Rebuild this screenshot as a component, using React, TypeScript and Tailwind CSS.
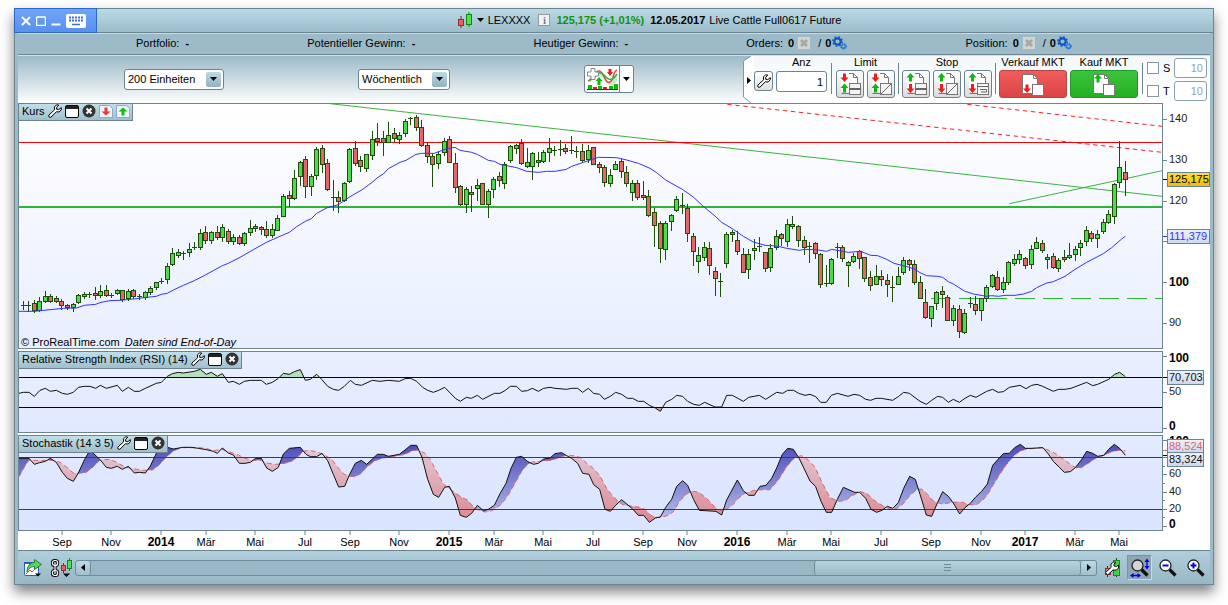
import { ReactNode } from "react";

type Candle = [number, number, number, number, string];

// high, body top, body bottom, low, kind (g = up, r = down, d = doji)
const candles: Candle[] = [
  [604, 616, 616, 629, "d"], [604, 616, 616, 633, "d"], [601, 610, 631, 637, "r"], [592, 604, 631, 634, "g"],
  [574, 589, 603, 607, "g"], [583, 589, 604, 606, "r"], [589, 595, 603, 607, "r"], [598, 604, 615, 627, "r"],
  [614, 616, 622, 629, "r"], [610, 613, 622, 634, "g"], [583, 586, 607, 609, "g"], [578, 583, 588, 594, "g"],
  [576, 583, 583, 592, "d"], [562, 580, 586, 597, "r"], [556, 574, 586, 591, "g"], [556, 571, 586, 590, "r"],
  [580, 585, 585, 592, "d"], [567, 571, 580, 584, "g"], [570, 571, 597, 604, "r"], [567, 573, 594, 600, "g"],
  [567, 571, 589, 594, "r"], [583, 590, 590, 598, "d"], [573, 577, 592, 598, "g"], [559, 565, 577, 583, "g"],
  [546, 547, 562, 568, "g"], [534, 545, 545, 551, "d"], [489, 499, 538, 551, "g"], [445, 460, 493, 496, "g"],
  [447, 457, 466, 472, "g"], [455, 459, 459, 479, "d"], [430, 448, 457, 470, "g"], [427, 443, 443, 448, "d"],
  [388, 400, 442, 449, "g"], [378, 397, 421, 431, "r"], [394, 397, 421, 431, "g"], [378, 397, 412, 418, "r"],
  [373, 382, 412, 425, "g"], [387, 394, 424, 431, "r"], [403, 412, 424, 433, "g"], [406, 412, 430, 434, "r"],
  [397, 400, 430, 437, "g"], [360, 385, 397, 407, "g"], [373, 380, 384, 395, "r"], [378, 382, 388, 404, "r"],
  [364, 388, 407, 412, "r"], [372, 388, 407, 413, "g"], [345, 355, 391, 392, "g"], [282, 290, 349, 350, "g"],
  [273, 286, 295, 319, "r"], [210, 235, 295, 298, "g"], [183, 187, 229, 255, "g"], [168, 178, 259, 293, "r"],
  [222, 229, 259, 285, "g"], [141, 148, 227, 237, "g"], [135, 145, 193, 216, "r"], [178, 190, 268, 270, "r"],
  [240, 293, 293, 332, "d"], [274, 292, 304, 338, "r"], [246, 250, 301, 303, "g"], [145, 148, 244, 248, "g"],
  [123, 145, 190, 195, "r"], [168, 181, 199, 213, "r"], [162, 163, 205, 213, "g"], [93, 118, 166, 177, "g"],
  [69, 115, 123, 137, "r"], [94, 115, 127, 167, "r"], [66, 106, 127, 128, "g"], [85, 100, 115, 123, "r"],
  [97, 106, 118, 131, "g"], [57, 64, 100, 110, "g"], [51, 56, 56, 72, "d"], [45, 52, 82, 90, "r"],
  [60, 82, 136, 140, "r"], [130, 136, 169, 188, "r"], [163, 169, 193, 258, "r"], [154, 163, 190, 206, "g"],
  [114, 124, 157, 165, "g"], [108, 118, 187, 188, "r"], [159, 190, 262, 278, "r"], [256, 259, 313, 315, "r"],
  [262, 268, 313, 338, "g"], [259, 277, 283, 335, "r"], [237, 256, 265, 300, "g"], [250, 250, 313, 314, "r"],
  [268, 274, 313, 353, "g"], [231, 238, 268, 293, "g"], [216, 229, 241, 258, "r"], [188, 193, 250, 264, "g"],
  [136, 139, 181, 186, "g"], [132, 136, 145, 161, "g"], [117, 130, 190, 194, "r"], [144, 187, 199, 203, "g"],
  [157, 160, 199, 237, "g"], [156, 181, 187, 200, "r"], [150, 157, 184, 188, "g"], [114, 145, 157, 183, "g"],
  [138, 151, 151, 165, "d"], [120, 147, 147, 165, "d"], [132, 145, 154, 161, "r"], [108, 152, 152, 161, "d"],
  [138, 154, 154, 173, "d"], [132, 154, 181, 188, "r"], [136, 150, 178, 186, "g"], [142, 142, 193, 194, "r"],
  [186, 193, 202, 218, "r"], [196, 202, 247, 258, "r"], [207, 226, 250, 258, "g"], [184, 193, 208, 209, "g"],
  [177, 184, 214, 231, "r"], [198, 217, 250, 258, "r"], [240, 250, 277, 302, "g"], [240, 250, 292, 299, "r"],
  [243, 286, 292, 299, "r"], [270, 290, 346, 350, "r"], [324, 337, 376, 438, "r"], [363, 370, 445, 486, "r"],
  [363, 370, 448, 479, "g"], [342, 346, 364, 390, "g"], [288, 298, 331, 335, "g"], [279, 316, 316, 339, "d"],
  [312, 325, 400, 423, "r"], [400, 409, 454, 495, "r"], [441, 466, 485, 518, "g"], [426, 442, 472, 480, "g"],
  [426, 445, 496, 522, "r"], [501, 514, 535, 585, "r"], [519, 543, 543, 588, "d"], [396, 403, 490, 503, "g"],
  [390, 397, 403, 425, "r"], [393, 421, 454, 462, "r"], [444, 463, 517, 518, "r"], [447, 463, 508, 534, "g"],
  [417, 445, 451, 477, "g"], [411, 439, 439, 455, "d"], [457, 457, 505, 513, "r"], [433, 445, 502, 513, "g"],
  [390, 409, 442, 447, "g"], [399, 403, 415, 435, "r"], [357, 373, 424, 438, "g"], [348, 374, 380, 384, "g"],
  [375, 379, 421, 438, "r"], [408, 421, 442, 462, "r"], [426, 439, 439, 486, "d"], [426, 430, 460, 476, "r"],
  [459, 463, 553, 563, "r"], [495, 551, 551, 560, "d"], [475, 478, 550, 552, "g"], [429, 443, 443, 473, "d"],
  [436, 442, 475, 483, "r"], [483, 487, 496, 560, "g"], [460, 469, 485, 486, "g"], [450, 455, 475, 504, "r"],
  [472, 472, 535, 545, "r"], [513, 532, 556, 572, "r"], [495, 529, 553, 554, "g"], [510, 530, 538, 555, "r"],
  [522, 541, 553, 590, "r"], [529, 563, 563, 603, "d"], [501, 529, 553, 554, "g"], [471, 481, 517, 522, "g"],
  [477, 482, 493, 512, "r"], [481, 493, 547, 554, "r"], [528, 547, 595, 596, "r"], [567, 607, 653, 656, "r"],
  [618, 619, 655, 680, "g"], [573, 577, 610, 628, "g"], [558, 574, 583, 621, "r"], [586, 592, 661, 662, "r"],
  [616, 625, 661, 677, "g"], [616, 628, 695, 713, "r"], [628, 640, 697, 700, "g"], [591, 611, 611, 623, "d"],
  [588, 613, 631, 644, "r"], [595, 595, 631, 662, "g"], [556, 562, 595, 605, "g"], [523, 526, 559, 562, "g"],
  [513, 532, 569, 572, "r"], [532, 547, 569, 578, "g"], [483, 487, 548, 554, "g"], [462, 478, 490, 497, "g"],
  [450, 463, 478, 489, "g"], [472, 475, 496, 506, "r"], [435, 448, 493, 506, "g"], [411, 427, 445, 446, "g"],
  [421, 430, 451, 457, "r"], [462, 472, 478, 506, "g"], [459, 469, 502, 504, "r"], [475, 481, 505, 515, "g"],
  [450, 472, 478, 485, "r"], [429, 466, 472, 475, "g"], [438, 448, 463, 482, "g"], [421, 430, 442, 467, "g"],
  [378, 391, 424, 437, "g"], [394, 400, 415, 425, "r"], [390, 403, 415, 443, "g"], [357, 367, 395, 401, "g"],
  [331, 343, 367, 369, "g"], [249, 253, 349, 371, "g"], [123, 202, 247, 261, "g"], [183, 217, 238, 287, "r"],
];

const average =
  "57,634 103,634 150,629 190,625 230,624 253,616 287,613 303,607 330,602 360,601 400,597 440,592 469,589 484,583 502,580 520,570 550,556 583,542 610,528 640,512 667,497 685,490 720,472 760,449 799,427 835,411 868,397 890,380 916,364 934,356 950,340 982,323 1015,314 1033,302 1050,290 1085,270 1115,248 1135,231 1150,222 1165,206 1200,187 1218,181 1248,163 1265,160 1303,160 1340,146 1365,142 1380,151 1415,157 1432,163 1465,181 1483,184 1500,193 1550,203 1580,214 1615,217 1640,214 1665,214 1699,208 1715,199 1750,187 1795,172 1850,173 1880,180 1915,190 1950,205 1970,218 1997,240 2047,268 2080,291 2112,321 2145,348 2165,367 2200,388 2230,409 2260,426 2295,436 2330,438 2360,445 2398,451 2415,448 2447,449 2480,454 2495,448 2545,457 2582,454 2612,466 2633,467 2660,478 2682,490 2725,501 2745,508 2760,518 2780,527 2812,529 2828,532 2845,545 2860,552 2893,573 2920,582 2960,589 2975,587 2995,589 3015,586 3045,586 3070,582 3095,574 3110,563 3140,549 3160,545 3195,529 3225,508 3260,487 3310,461 3335,443 3365,417 3376,409";

const rsi =
  "57,160 70,157 87,157 103,169 120,151 136,145 151,154 169,151 187,160 202,163 220,157 235,142 253,139 270,139 287,145 301,136 319,145 352,136 367,154 385,142 403,154 418,154 436,145 469,130 484,127 502,109 517,101 535,97 550,99 583,94 601,88 619,103 634,97 652,109 667,101 685,127 700,124 718,133 733,124 751,121 784,121 799,133 817,127 835,115 850,100 868,103 883,95 901,89 916,121 931,118 950,103 965,118 983,139 1000,148 1016,151 1033,139 1051,121 1066,133 1084,136 1117,121 1140,124 1165,121 1198,124 1215,116 1232,115 1250,124 1268,142 1283,151 1300,157 1316,151 1334,142 1366,175 1381,184 1399,172 1414,175 1432,166 1448,178 1483,160 1500,160 1516,151 1531,139 1549,139 1565,154 1582,152 1597,145 1615,154 1631,145 1650,142 1665,145 1700,148 1715,145 1733,145 1748,157 1765,145 1781,160 1799,163 1813,178 1831,169 1847,157 1865,163 1882,175 1898,175 1915,184 1931,184 1948,196 1966,204 1981,214 1997,187 2015,178 2030,166 2048,169 2063,184 2081,193 2098,196 2114,187 2145,201 2165,201 2180,166 2197,166 2230,184 2246,172 2278,166 2297,178 2330,157 2348,160 2363,151 2381,151 2396,160 2415,166 2430,163 2447,170 2462,187 2479,187 2494,166 2512,160 2544,169 2562,163 2579,166 2597,178 2612,181 2628,175 2644,175 2678,181 2695,170 2711,157 2728,160 2760,184 2779,193 2795,181 2813,169 2828,172 2845,187 2860,178 2878,187 2895,175 2911,166 2928,172 2960,154 2978,148 2994,157 3010,155 3028,142 3060,136 3078,146 3095,136 3111,133 3128,139 3160,154 3176,148 3195,148 3213,145 3260,127 3278,137 3293,133 3326,118 3344,103 3359,97 3376,110";

const stochK =
  "57,355 87,355 103,373 119,368 136,364 151,355 169,367 187,397 202,415 220,424 235,399 253,360 270,330 301,360 319,382 334,385 352,379 367,388 385,379 403,399 418,397 436,399 451,378 469,340 484,325 502,322 520,327 548,322 575,322 595,325 619,329 640,334 652,340 667,324 685,339 700,345 718,370 735,370 751,367 767,355 784,355 800,384 817,394 835,382 850,342 868,325 901,322 918,343 931,350 950,350 966,340 983,362 1000,403 1016,441 1034,439 1048,405 1066,370 1084,361 1100,373 1117,357 1132,343 1150,343 1165,349 1198,343 1215,330 1232,316 1250,316 1266,352 1283,418 1300,463 1316,472 1334,442 1348,439 1366,474 1381,526 1399,532 1415,520 1432,496 1450,512 1465,508 1483,496 1500,461 1518,430 1533,385 1549,352 1565,349 1582,364 1600,373 1615,370 1631,357 1650,354 1665,341 1685,338 1700,347 1715,355 1733,370 1748,400 1767,403 1781,434 1799,448 1815,508 1831,514 1847,496 1865,479 1898,507 1915,526 1931,526 1948,547 1966,534 1981,531 1997,502 2015,478 2030,439 2048,422 2063,436 2081,479 2098,511 2148,514 2165,525 2180,480 2212,420 2230,452 2246,466 2263,466 2280,439 2298,436 2315,415 2330,384 2347,343 2363,325 2380,328 2398,356 2430,423 2447,440 2463,484 2479,517 2495,517 2512,478 2530,442 2564,457 2579,457 2597,475 2613,508 2630,517 2646,511 2662,499 2678,505 2695,488 2711,445 2729,409 2746,418 2760,463 2779,525 2795,529 2813,487 2828,455 2845,469 2860,489 2879,522 2895,503 2911,490 2928,470 2945,454 2962,432 2978,376 2994,358 3010,341 3028,340 3044,323 3061,313 3076,325 3093,325 3129,323 3145,342 3160,364 3178,382 3193,397 3211,395 3226,383 3244,360 3260,334 3278,340 3293,349 3311,346 3326,328 3343,313 3359,325 3376,346";

const stochD =
  "57,410 75,378 87,360 110,361 136,361 160,361 180,367 205,385 220,399 235,400 257,398 275,385 300,360 330,358 350,367 375,381 400,386 430,391 457,390 475,377 500,350 520,333 545,323 600,323 625,327 640,332 665,328 690,336 715,345 735,355 755,361 785,361 800,369 825,373 845,372 870,366 890,354 910,334 925,331 950,335 975,346 995,358 1010,378 1033,403 1048,409 1065,410 1084,400 1100,382 1125,362 1150,354 1175,350 1200,346 1215,343 1235,333 1255,330 1275,340 1290,358 1305,385 1330,432 1350,448 1365,458 1385,472 1402,480 1420,500 1435,510 1455,516 1470,514 1483,508 1505,492 1525,465 1545,430 1565,394 1582,374 1597,366 1620,364 1655,361 1680,352 1695,347 1722,347 1740,352 1765,374 1780,385 1800,408 1820,445 1840,470 1858,487 1870,495 1915,501 1935,508 1952,526 1970,532 1985,532 2005,526 2020,515 2040,482 2060,462 2075,454 2095,456 2120,475 2145,502 2158,512 2180,508 2197,496 2215,475 2235,460 2265,450 2310,449 2335,420 2360,380 2385,352 2405,347 2425,360 2445,382 2470,435 2490,473 2515,484 2535,482 2555,468 2580,455 2600,460 2625,483 2650,498 2665,505 2690,506 2710,491 2730,466 2750,449 2765,447 2780,460 2800,483 2825,492 2860,487 2885,486 2905,493 2925,496 2945,484 2962,465 2980,434 3000,402 3020,373 3044,345 3062,333 3080,327 3125,323 3145,330 3170,343 3195,361 3215,376 3230,384 3244,383 3265,370 3293,351 3310,347 3335,335 3359,331 3376,332";

const months: [number, string][] = [
  [44, "Sep"], [93, "Nov"], [143, "2014"], [188, "Mär"], [237, "Mai"], [287, "Jul"],
  [332, "Sep"], [381, "Nov"], [431, "2015"], [476, "Mär"], [525, "Mai"], [575, "Jul"],
  [625, "Sep"], [669, "Nov"], [719, "2016"], [769, "Mär"], [813, "Mai"], [863, "Jul"],
  [913, "Sep"], [963, "Nov"], [1007, "2017"], [1057, "Mär"], [1101, "Mai"],
];

// snap to whole pixels, three drawing units each
const snap = (v: number) => Math.floor(v / 3) * 3;

const PriceChart = () => (
  <svg viewBox="57 12 3429 732" preserveAspectRatio="none" className="block h-[244px] w-full">
    <path d="M990 11L3487 289M3028 311L3487 212" stroke="#3cb43c" strokeWidth="3" />
    <path d="M2182 13L3487 157M2902 13L3487 79" stroke="#ff2020" strokeWidth="3" strokeDasharray="13 11" />
    <path d="M57 127.500H3487" stroke="#ff0000" strokeWidth="3" />
    <path d="M57 321H3487" stroke="#2fb52f" strokeWidth="6" />
    <path d="M2793 595.500H3487" stroke="#2fb52f" strokeWidth="3" strokeDasharray="60 24" />
    <g shapeRendering="crispEdges">
      {candles.map(([high, top, bottom, low, kind], i) => {
        const x = Math.floor(23.2 + 5.5377 * i) * 3;
        return (
          <g key={i}>
            <rect x={x} y={snap(high)} width="3" height={snap(low) - snap(high) + 3} fill="#1f4d0a" />
            {kind === "d" ? (
              <rect x={x - 6} y={snap(top)} width="15" height="3" fill="#1f4d0a" />
            ) : (
              <>
                <rect x={x - 6} y={snap(top)} width="15" height={snap(bottom) - snap(top) + 3} fill="#1f4d0a" />
                <rect
                  x={x - 3}
                  y={snap(top) + 3}
                  width="9"
                  height={Math.max(snap(bottom) - snap(top) - 3, 0)}
                  fill={kind === "g" ? "#50d850" : "#e06868"}
                />
              </>
            )}
          </g>
        );
      })}
    </g>
    <polyline points={average} fill="none" stroke="#3333ff" strokeWidth="3" />
  </svg>
);

const RsiChart = () => (
  <svg viewBox="57 36 3429 240" preserveAspectRatio="none" className="block h-20 w-full">
    <clipPath id="overbought">
      <rect x="57" y="36" width="3429" height="76" />
    </clipPath>
    <clipPath id="oversold">
      <rect x="57" y="203" width="3429" height="73" />
    </clipPath>
    <polygon points={`57,276 ${rsi} 3376,276`} fill="#b2e2bc" clipPath="url(#overbought)" />
    <polygon points={`57,36 ${rsi} 3376,36`} fill="#e09aa4" clipPath="url(#oversold)" />
    <path d="M57 112.500H3487M57 202.500H3487" stroke="#000" strokeWidth="3" />
    <polyline points={rsi} fill="none" stroke="#111" strokeWidth="3" />
  </svg>
);

const StochasticChart = () => (
  <svg viewBox="57 288 3429 282" preserveAspectRatio="none" className="block h-[94px] w-full">
    <defs>
      <linearGradient id="rise" gradientUnits="userSpaceOnUse" x1="0" y1="310" x2="0" y2="540">
        <stop offset="0" stopColor="#4c4cb8" />
        <stop offset="1" stopColor="#b4bcec" />
      </linearGradient>
      <linearGradient id="drop" gradientUnits="userSpaceOnUse" x1="0" y1="310" x2="0" y2="540">
        <stop offset="0" stopColor="#e2ccdc" />
        <stop offset="1" stopColor="#dc8a94" />
      </linearGradient>
      <clipPath id="aboveD">
        <polygon points={`57,288 ${stochD} 3376,288`} />
      </clipPath>
      <clipPath id="belowD">
        <polygon points={`57,570 ${stochD} 3376,570`} />
      </clipPath>
    </defs>
    <polygon points={`57,570 ${stochK} 3376,570`} fill="url(#rise)" clipPath="url(#aboveD)" />
    <polygon points={`57,288 ${stochK} 3376,288`} fill="url(#drop)" clipPath="url(#belowD)" />
    <polyline points={stochD} fill="none" stroke="#e06464" strokeWidth="3" strokeDasharray="14 10" />
    <path d="M57 352.500H3487M57 508.500H3487" stroke="#2c2ccc" strokeWidth="3" />
    <polyline points={stochK} fill="none" stroke="#111" strokeWidth="3" />
  </svg>
);

const Tag = ({ y, w, fill, color, label }: { y: number; w: number; fill: string; color: string; label: string }) => (
  <>
    <rect x="4.500" y={y + 0.5} width={w} height="14" fill={fill} stroke="#6c8490" />
    <text x="6" y={y + 11} fill={color}>{label}</text>
  </>
);

const Axis = ({ className, ticks, children }: { className: string; ticks: string; children: ReactNode }) => (
  <svg className={`block w-[47px] shrink-0 text-[11px] ${className}`} fill="#222">
    <defs>
      <linearGradient id="gold" x2="0" y2="1">
        <stop stopColor="#ffe030" />
        <stop offset="1" stopColor="#f0b810" />
      </linearGradient>
      <linearGradient id="pale" x2="0" y2="1">
        <stop stopColor="#eef3fc" />
        <stop offset="1" stopColor="#ccd8ee" />
      </linearGradient>
    </defs>
    <path d={ticks} stroke="#6c8490" />
    {children}
  </svg>
);

const Wrench = ({ size = 14 }: { size?: number }) => (
  <svg width={size} height={size} viewBox="0 0 14 14" className="shrink-0">
    <path
      d="M8.800.8L6.400 2.800 6.600 5.800.8 11.200 1 13 2.800 13.300 8.400 7.800 11.200 8 13.300 5.800V3.600L10.800 5.700 8.600 5.200 8.700 3.200 10.800 1.200Z"
      fill="#fff"
      stroke="#000"
      strokeLinejoin="round"
    />
  </svg>
);

const WindowIcon = () => (
  <svg width="14" height="13" viewBox="0 0 14 13" className="shrink-0">
    <rect x=".5" y=".5" width="13" height="12" rx="1.500" fill="#fff" stroke="#000" />
    <path d="M1 1H13V4H1Z" fill="#222" />
  </svg>
);

const CloseIcon = () => (
  <svg width="14" height="14" viewBox="0 0 14 14" className="shrink-0">
    <circle cx="7" cy="7" r="6.500" fill="#333" />
    <path d="M4.500 4.500L9.500 9.500M9.500 4.500L4.500 9.500" stroke="#fff" strokeWidth="2" />
  </svg>
);

const ArrowNote = ({ up }: { up?: boolean }) => (
  <svg width="14" height="13" viewBox="0 0 14 13" className="shrink-0">
    <path d="M.5.500H10.500L13.500 3.500V12.500H.5Z" fill="#eef4fc" stroke="#8fa9c8" />
    <path
      d={up ? "M7 2.500L11.500 6.500H8.500V10.500H5.500V6.500H2.500Z" : "M7 10.500L11.500 6.500H8.500V2.500H5.500V6.500H2.500Z"}
      fill={up ? "#10c010" : "#f03838"}
    />
  </svg>
);

const PanelTitle = ({ title, notes }: { title: string; notes?: boolean }) => (
  <div className="absolute -left-px -top-px flex h-[18px] items-center gap-[3px] border border-[#6c8490] bg-linear-to-b from-[#c0dfea] to-[#a0bfcc] pb-0.5 pl-[3px] pr-0.5">
    <h2>{title}</h2>
    <button aria-label="Einstellungen"><Wrench /></button>
    <button aria-label="Fenster"><WindowIcon /></button>
    <button aria-label="Entfernen"><CloseIcon /></button>
    {notes && (
      <>
        <button aria-label="Verkaufen"><ArrowNote /></button>
        <button aria-label="Kaufen"><ArrowNote up /></button>
      </>
    )}
  </div>
);

const Gears = () => (
  <svg width="15" height="14" viewBox="0 0 15 14" fill="none">
    <circle cx="5.500" cy="5.500" r="3.200" stroke="#0d56c4" strokeWidth="2.200" />
    <circle cx="5.500" cy="5.500" r="4.700" stroke="#0d56c4" strokeWidth="1.400" strokeDasharray="1.850 1.850" />
    <circle cx="11.500" cy="10.300" r="1.900" stroke="#2a74dc" strokeWidth="1.400" />
    <circle cx="11.500" cy="10.300" r="3" stroke="#2a74dc" strokeWidth="1" strokeDasharray="1.200 1.200" />
  </svg>
);

const Counter = ({ label }: { label: string }) => (
  <div className="flex items-center">
    <span className="mr-[5px]">{label}</span>
    <b>0</b>
    <svg width="12" height="12" viewBox="0 0 12 12" className="ml-1 mr-2">
      <rect width="12" height="12" fill="#d4d4cf" />
      <path d="M3 3L9 9M9 3L3 9" stroke="#a8a8a4" strokeWidth="3" />
    </svg>
    <span className="mr-1">/</span>
    <b className="mr-px">0</b>
    <Gears />
  </div>
);

const Caret = () => (
  <svg width="7" height="4" viewBox="0 0 7 4">
    <path d="M0 0H7L3.500 4Z" />
  </svg>
);

const Picker = ({ label, value, className }: { label: string; value: string; className: string }) => (
  <div className={`relative h-[21px] ${className}`}>
    <select
      aria-label={label}
      className="h-full w-full appearance-none rounded-[3px] border border-[#6c8490] bg-white pl-[3px] outline-none"
    >
      <option>{value}</option>
    </select>
    <span className="pointer-events-none absolute right-[3px] top-[3px] flex h-[15px] w-[15px] items-center justify-center rounded-[2px] bg-linear-to-b from-[#bcdae6] to-[#92b2c0]">
      <Caret />
    </span>
  </div>
);

const Arrows = ({ upFirst }: { upFirst?: boolean }) => (
  <>
    <path
      d={upFirst ? "M8.500 3L12.500 7.500H10V11.500H7V7.500H4.500Z" : "M8.500 12L12.500 7.500H10V3.500H7V7.500H4.500Z"}
      fill={upFirst ? "#0fb80f" : "#ee1c1c"}
    />
    <path
      d={upFirst ? "M8.500 23L12.500 18.500H10V14H7V18.500H4.500Z" : "M8.500 13.500L12.500 18H10V22.500H7V18H4.500Z"}
      fill={upFirst ? "#ee1c1c" : "#0fb80f"}
    />
  </>
);

const OrderButton = ({ name, upFirst, mark }: { name: string; upFirst?: boolean; mark: string }) => (
  <button
    aria-label={name}
    className="h-7 w-7 rounded-[3px] border border-[#6c8490] bg-linear-to-b from-white to-[#dcdcdc]"
  >
    <svg width="26" height="26" viewBox="1 1 26 26" fill="none" stroke="#777">
      <path d="M5.500 3.500H17.500L21.500 7.500V21.500H5.500Z" fill="#fff" stroke="none" />
      <path d="M13 3.500H17.500L21.500 7.500V13M17.500 3.500V7.500H21.500M5.500 23.500H13" />
      <rect x="13.500" y="13.500" width="11" height="11" fill="#f4f4f4" />
      <path d={mark} stroke="#666" />
      <g stroke="none"><Arrows upFirst={upFirst} /></g>
    </svg>
  </button>
);

const BARS = "M13 18.500H25M13 19.500H25";
const SLASH = "M14 24L24 14";
const STEP = "M13 16.500H25M16 19.500H22.500V22H17";

const Separator = ({ wide }: { wide?: boolean }) => (
  <span className={`mt-[7px] h-[31px] w-px bg-[#6c8490] ${wide ? "mx-px" : ""}`} />
);

const Group = ({ label, children }: { label: string; children: ReactNode }) => (
  <div className="flex flex-col items-center">
    <span className="h-3.5 leading-[13px]">{label}</span>
    <div className="flex gap-[3px]">{children}</div>
  </div>
);

const MarketButton = ({ label, buy }: { label: string; buy?: boolean }) => (
  <Group label={label}>
    <button
      aria-label={label}
      className={`flex h-7 w-[68px] justify-center rounded-[3px] border ${
        buy
          ? "border-[#1f9a2a] bg-linear-to-b from-[#3cc43c] to-[#22b022]"
          : "border-[#b84848] bg-linear-to-b from-[#f05c5c] to-[#dc4444]"
      }`}
    >
      <svg width="26" height="26" viewBox="0 0 26 26" fill="#fff" stroke="#777">
        <path d="M2.500 3.500H13.500L17.500 7.500V22.500H2.500Z" />
        <path d="M13.500 3.500V7.500H17.500" fill="none" />
        <rect x="12.500" y="13.500" width="11" height="11" />
        <path
          d={buy ? "M7 3L11 7.500H8.500V11.500H5.500V7.500H3Z" : "M7 22L11 17.500H8.500V13.500H5.500V17.500H3Z"}
          fill={buy ? "#0fb80f" : "#ee1c1c"}
          stroke="none"
        />
      </svg>
    </button>
  </Group>
);

const Protection = ({ label }: { label: string }) => (
  <div className="flex items-center">
    <label className="flex w-[27px] items-center gap-1">
      <input type="checkbox" className="h-3 w-3 shrink-0 appearance-none border border-[#8398a4] bg-white" />
      {label}
    </label>
    <input
      aria-label={`${label} Punkte`}
      defaultValue="10"
      className="h-5 w-[33px] rounded-[3px] border border-[#8aa0ac] bg-white pr-[3px] text-right text-[#94a4ae] outline-none"
    />
  </div>
);

const Toolbar = () => (
  <div className="flex h-12 border-t border-[#cfe3ec] bg-linear-to-b from-[#9cbac8] to-[#fdfefe]">
    <div className="flex flex-1 items-center justify-between pb-px pl-[106px] pr-[109px]">
      <Picker label="Einheiten" value="200 Einheiten" className="w-[100px]" />
      <Picker label="Zeitrahmen" value="Wöchentlich" className="w-[92px]" />
      <div className="flex h-7 w-[50px] rounded-[3px] border border-[#6c8490] bg-white">
        <button aria-label="Indikator hinzufügen" className="flex flex-1 items-center justify-center border-r border-[#6c8490]">
          <svg width="33" height="24" viewBox="0 0 33 24" fill="none">
            <path d="M3 14C6 8 8 4 12 4C18 4 19 16 24 15C27 14 29 8 31 6V14C28 20 21 20 17 12C13 5 8 12 4 15Z" fill="#c4ecca" />
            <path d="M2 14C6 13 8 4 13 4C18 4 19 18 24 15C28 13 27 4 31 3" stroke="#e04848" strokeWidth="1.500" />
            <path d="M3 14C9 10 12 2 18 8C22 13 26 15 31 7" stroke="#38b038" strokeWidth="1.500" />
            <path d="M24 9L27 5H25.500V2H22.500V5H21Z" fill="#ee1c1c" />
            <path d="M13 10L16.500 14H14.500V18H11.500V14H9.500Z" fill="#0fb80f" />
            <path d="M5 1.500H9V5H12.500V9H9V12.500H5V9H1.500V5H5Z" fill="#fff" stroke="#7a8f9b" />
            <path d="M2 18H6V22H2ZM12 19H16V22H12ZM23 19H27V22H23ZM28 17H32V22H28Z" fill="#0fb80f" />
            <path d="M7 20H11V22H7ZM17 20H21V22H17Z" fill="#ee1c1c" />
            <path d="M1 22.500H32" stroke="#1c1cd0" />
          </svg>
        </button>
        <button aria-label="Mehr Indikatoren" className="flex w-[13px] items-center justify-center"><Caret /></button>
      </div>
    </div>
    <div className="flex shrink-0">
      <button aria-label="Handelsleiste einklappen" className="w-[11px]">
        <svg width="11" height="47" viewBox="0 0 11 47" className="block">
          <path d="M11 0H8L.5 5V41L8 47H11Z" fill="#fff" />
          <path d="M8 0L.5 5V41L8 47" fill="none" stroke="#7f98a4" />
          <path d="M4 21V28L8 24.500Z" />
        </svg>
      </button>
      <div className="flex gap-[3px] bg-linear-to-b from-[#f4f8fa] to-white pr-[3px]">
        <button
          aria-label="Handelseinstellungen"
          className="mt-[15px] flex h-5 w-[19px] items-center justify-center rounded-[3px] border border-[#6c8490] bg-linear-to-b from-white to-[#e0e0e0]"
        >
          <Wrench />
        </button>
        <label className="flex flex-col items-center">
          <span className="h-[15px] leading-[13px]">Anz</span>
          <input
            defaultValue="1"
            className="h-[21px] w-[51px] rounded-[3px] border border-[#6c8490] bg-white pr-[3px] text-right outline-none"
          />
        </label>
        <Separator wide />
        <Group label="Limit">
          <OrderButton name="Limit" mark={BARS} />
          <OrderButton name="Limit schräg" mark={SLASH} />
        </Group>
        <Separator />
        <Group label="Stop">
          <OrderButton name="Stop" upFirst mark={BARS} />
          <OrderButton name="Stop schräg" upFirst mark={SLASH} />
          <OrderButton name="Trailing Stop" upFirst mark={STEP} />
        </Group>
        <Separator />
        <MarketButton label="Verkauf MKT" />
        <MarketButton label="Kauf MKT" buy />
        <Separator wide />
        <div className="flex flex-col gap-[3px] pt-[2px]">
          <Protection label="S" />
          <Protection label="T" />
        </div>
      </div>
    </div>
  </div>
);

const TitleBar = () => (
  <header className="flex h-6 border-b border-[#6c8490] bg-linear-to-b from-[#b8d9e5] to-[#9dbcca]">
    <div className="-ml-px -mt-px flex h-[25px] w-[83px] items-center gap-[5px] border border-[#2c68c8] bg-linear-to-b from-[#70a4fa] to-[#5890ec] pl-1.5 text-white">
      <button aria-label="Schließen">
        <svg width="10" height="10" viewBox="0 0 10 10"><path d="M1 1L9 9M9 1L1 9" stroke="#fff" strokeWidth="2" /></svg>
      </button>
      <button aria-label="Maximieren">
        <svg width="10" height="10" viewBox="0 0 10 10"><path d="M.5 1H9.500M.5 1V9.500H9.500V1" fill="none" stroke="#fff" strokeWidth="1.500" /></svg>
      </button>
      <button aria-label="Minimieren">
        <svg width="10" height="10" viewBox="0 0 10 10"><path d="M.5 8.500H9.500" stroke="#fff" strokeWidth="2" /></svg>
      </button>
      <button aria-label="Tastatur">
        <svg width="20" height="14" viewBox="0 0 20 14">
          <rect width="20" height="14" rx="2" fill="#fff" />
          <path d="M3 3.500H17M3 6.500H17" stroke="#3a70d8" strokeWidth="2" strokeDasharray="2 1" />
          <path d="M6 10.500H14" stroke="#3a70d8" strokeWidth="1.500" />
        </svg>
      </button>
    </div>
    <div className="flex flex-1 items-center justify-center pb-0.5 pr-3">
      <svg width="16" height="16" viewBox="0 0 16 16">
        <path d="M4 4V16" stroke="#8a2020" />
        <rect x="1.500" y="7.500" width="5" height="6" fill="#e86060" stroke="#a02828" />
        <path d="M12 0V15" stroke="#0c8a0c" />
        <rect x="9.500" y="2.500" width="5" height="10" fill="#50e050" stroke="#0c8a0c" />
      </svg>
      <button aria-label="Instrument wählen" className="mx-1"><Caret /></button>
      <h1>LEXXXX</h1>
      <button aria-label="Info" className="ml-2 mr-1.5 h-3 w-3 border border-[#9a9a9a] bg-[#f4f4f4] text-center font-['Liberation_Serif',serif] font-bold leading-[10px] text-[#6c8490]">
        i
      </button>
      <b className="mr-1.5 text-[#0f9410]">125,175 (+1,01%)</b>
      <b className="mr-1">12.05.2017</b>
      <span>Live Cattle Full0617 Future</span>
    </div>
  </header>
);

const Lens = ({ children, fill = "#fff" }: { children: ReactNode; fill?: string }) => (
  <svg width="20" height="20" viewBox="0 0 20 20" fill="none">
    <path d="M11.500 11.500L17.500 17.500" stroke="#111" strokeWidth="3.200" />
    <circle cx="7.500" cy="7.500" r="5.500" fill={fill} stroke="#222" strokeWidth="1.300" />
    {children}
  </svg>
);

const Footer = () => (
  <footer className="flex h-[34px] items-center border-t border-[#6c8490] bg-linear-to-b from-[#b0cedb] to-[#98b7c5] pl-1">
    <button aria-label="Exportieren">
      <svg width="22" height="20" viewBox="0 0 22 20">
        <rect x="2.500" y="4.500" width="14" height="13" rx="1" fill="#fff" stroke="#2a62b8" />
        <path d="M2 4H14V6H2Z" fill="#2a62b8" />
        <path d="M4 16L8 12L10 14L14 10" stroke="#e04040" fill="none" />
        <path d="M5 14C5 8 8 4.500 12.500 4.500V1.500L19.500 6.500L12.500 11.500V8.500C9.500 8.500 7 10 5 14Z" fill="#60d060" stroke="#1c8a2c" />
        <path d="M13 15.500H19L16 18.500Z" />
      </svg>
    </button>
    <button aria-label="Verknüpfen" className="ml-1.5">
      <svg width="10" height="20" viewBox="0 0 10 20" fill="none">
        <g stroke="#111" strokeWidth="3.200">
          <rect x="2.500" y="2.500" width="5" height="5" rx="2" />
          <rect x="2.500" y="12.500" width="5" height="5" rx="2" />
          <path d="M5 6V14" />
        </g>
        <g stroke="#fff" strokeWidth="1.200">
          <rect x="2.500" y="2.500" width="5" height="5" rx="2" />
          <rect x="2.500" y="12.500" width="5" height="5" rx="2" />
          <path d="M5 6V14" />
        </g>
      </svg>
    </button>
    <button aria-label="Darstellung">
      <svg width="13" height="20" viewBox="0 0 13 20">
        <path d="M3.500 5V15" stroke="#8a2020" />
        <rect x="1.500" y="7.500" width="4" height="5" fill="#e86060" stroke="#a02828" />
        <path d="M9.500 0V13" stroke="#0c8a0c" />
        <rect x="7.500" y="2.500" width="4" height="8" fill="#50e050" stroke="#0c8a0c" />
        <path d="M3 15.500H10L6.500 19Z" />
      </svg>
    </button>
    <div className="ml-0.5 flex h-4 flex-1 items-stretch rounded-[3px] border border-[#6f8b98] bg-[#98b8c6]">
      <button aria-label="Zurück" className="flex w-[15px] items-center justify-center rounded-[3px] border-r border-[#6f8b98] bg-linear-to-b from-[#bcdae6] to-[#9fc0ce]">
        <svg width="4" height="7" viewBox="0 0 4 7"><path d="M4 0V7L0 3.500Z" /></svg>
      </button>
      <div className="flex flex-1 justify-end">
        <div className="flex w-[27%] items-center justify-center rounded-[3px] border-x border-[#6f8b98] bg-linear-to-b from-[#b4d4e0] to-[#9abac8]">
          <svg width="7" height="7" viewBox="0 0 7 7"><path d="M0 .5H7M0 3.500H7M0 6.500H7" stroke="#6f8b98" /></svg>
        </div>
      </div>
      <button aria-label="Vor" className="flex w-[15px] items-center justify-center rounded-[3px] bg-linear-to-b from-[#bcdae6] to-[#9fc0ce]">
        <svg width="4" height="7" viewBox="0 0 4 7"><path d="M0 0V7L4 3.500Z" /></svg>
      </button>
    </div>
    <button aria-label="Chart einstellen" className="ml-[7px]">
      <svg width="17" height="20" viewBox="0 0 17 20">
        <path d="M3.500 8V19M12.500 0V19" stroke="#333" />
        <rect x="1.500" y="10.500" width="5" height="6" fill="#e08080" stroke="#8a3030" />
        <rect x="9.500" y="2.500" width="6" height="15" fill="#48d048" stroke="#1c8a1c" />
        <path d="M9.500 4L7 6 7 9.500 1.500 14.500 3.500 17 9 12 12.500 12 14.500 10V7L12.500 8.500 10 8V6L12 4.500Z" fill="#fff" stroke="#111" />
      </svg>
    </button>
    <button aria-label="Automatischer Zoom" className="ml-1.5 flex h-[25px] w-[25px] items-center justify-center border border-[#7c929e] border-b-[#c8dce6] border-r-[#c8dce6] bg-[#8fa6b2]">
      <Lens fill="#d4d4d4">
        <path d="M17 3V9M3 17.500H8" stroke="#0000e8" strokeWidth="1.300" />
        <path d="M14.500 4L17 .5L19.500 4ZM14.500 8L17 11.500L19.500 8ZM3.500 15L0 17.500L3.500 20ZM7.500 15L11 17.500L7.500 20Z" fill="#0000e8" />
      </Lens>
    </button>
    <button aria-label="Verkleinern" className="ml-1.5">
      <Lens><path d="M4.500 7.500H10.500" stroke="#0000e8" strokeWidth="2" /></Lens>
    </button>
    <button aria-label="Vergrößern" className="ml-2 mr-1">
      <Lens><path d="M4.500 7.500H10.500M7.500 4.500V10.500" stroke="#0000e8" strokeWidth="2" /></Lens>
    </button>
  </footer>
);

export default function App() {
  return (
    <div className="bg-white px-3.5 pb-5 pt-2 font-['Liberation_Sans',Arial,sans-serif] text-[11px] leading-[14px] text-black">
      <div className="border border-[#6c8490] bg-[#9cbac8] shadow-[0_7px_12px_rgba(0,0,0,0.5)]">
        <TitleBar />
        <main className="mx-[3px]">
          <div className="flex h-[22px] items-center justify-between border-b border-t border-b-[#6c8490] border-t-[#c4dce6] bg-[#9cbac8] pb-0.5 pl-[118px] pr-[138px]">
            <div>Portfolio:<b className="ml-1.5">-</b></div>
            <div>Potentieller Gewinn:<b className="ml-1.5">-</b></div>
            <div>Heutiger Gewinn:<b className="ml-1.5">-</b></div>
            <Counter label="Orders:" />
            <Counter label="Position:" />
          </div>
          <Toolbar />
          <div className="bg-white">
            <section className="flex">
              <div className="relative min-w-0 flex-1 border border-[#6c8490] bg-linear-to-b from-white to-[#e8eeff]">
                <PriceChart />
                <PanelTitle title="Kurs" notes />
                <p className="absolute bottom-0 left-0.5 leading-3">
                  © ProRealTime.com <i className="ml-0.5">Daten sind End-of-Day</i>
                </p>
              </div>
              <Axis className="h-[246px]" ticks="M0 16.500H4M0 57.500H4M0 98.500H4M0 138.500H4M0 179.500H4M0 220.500H4">
                <path d="M0 76.500H4" stroke="#000" />
                <path d="M0 133.500H4" stroke="#3333ff" />
                <text x="6" y="19">140</text>
                <text x="6" y="60">130</text>
                <text x="6" y="101">120</text>
                <text x="6" y="183" className="text-xs font-bold" fill="#000">100</text>
                <text x="6" y="223">90</text>
                <Tag y={69} w={42} fill="url(#gold)" color="#000" label="125,175" />
                <Tag y={126} w={42} fill="url(#pale)" color="#3333ff" label="111,379" />
              </Axis>
            </section>
            <section className="mt-0.5 flex">
              <div className="relative min-w-0 flex-1 border border-[#6c8490] bg-linear-to-b from-[#eaf0ff] to-[#e0e8ff]">
                <RsiChart />
                <PanelTitle title="Relative Strength Index (RSI) (14)" />
              </div>
              <Axis className="h-[82px]" ticks="M0 5.500H4M0 41.500H4M0 77.500H4">
                <path d="M0 26.500H4" stroke="#000" />
                <text x="6" y="11" className="text-xs font-bold" fill="#000">100</text>
                <text x="6" y="44">50</text>
                <text x="6" y="79" className="text-xs font-bold" fill="#000">0</text>
                <Tag y={19} w={36} fill="url(#pale)" color="#111" label="70,703" />
              </Axis>
            </section>
            <section className="mt-0.5 flex">
              <div className="relative min-w-0 flex-1 border border-[#6c8490] bg-linear-to-b from-[#e2eaff] to-[#dae4ff]">
                <StochasticChart />
                <PanelTitle title="Stochastik (14 3 5)" />
              </div>
              <Axis
                className="h-24"
                ticks="M0 5.500H4M0 22.500H4M0 39.500H4M0 57.500H4M0 74.500H4M0 91.500H4M0 31.500H2M0 48.500H2M0 65.500H2M0 82.500H2"
              >
                <path d="M0 15.500H4" stroke="#e06464" />
                <path d="M0 20.500H4" stroke="#000" />
                <text x="6" y="10" className="text-xs font-bold" fill="#000">100</text>
                <text x="6" y="42">60</text>
                <text x="6" y="60">40</text>
                <text x="6" y="77">20</text>
                <text x="6" y="93" className="text-xs font-bold" fill="#000">0</text>
                <Tag y={4} w={36} fill="url(#pale)" color="#e06464" label="88,524" />
                <Tag y={17} w={36} fill="url(#pale)" color="#111" label="83,324" />
              </Axis>
            </section>
            <div className="pr-[47px]">
              <svg className="block h-[19px] w-full text-[11px]" textAnchor="middle">
                {months.map(([x, label]) => {
                  const at = `${(x / 1145) * 100}%`;
                  return (
                    <g key={x}>
                      <line x1={at} x2={at} y1="0" y2="4" stroke="#6c8490" />
                      <text x={at} y="15" className={label.startsWith("20") ? "text-xs font-bold" : ""}>{label}</text>
                    </g>
                  );
                })}
              </svg>
            </div>
          </div>
          <Footer />
        </main>
      </div>
    </div>
  );
}
